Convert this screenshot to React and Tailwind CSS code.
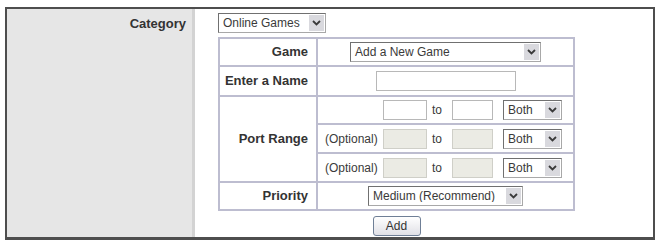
import React from 'react';

const font = { fontFamily: '"Liberation Sans", Arial, sans-serif' };

const Chevron = () => (
  <svg width="9" height="6" viewBox="0 0 9 6" fill="none">
    <path d="M1 1l3.5 3.5L8 1" stroke="#3a3a3a" strokeWidth="1.8" />
  </svg>
);

const Select = ({ value, width }) => (
  <div
    className="flex h-[20px] items-center border border-[#a8a8a8] border-l-[#707070] border-t-[#707070] bg-white"
    style={{ width }}
  >
    <span className="flex-1 truncate pl-[4px] text-[12px] leading-none text-[#3a3a3a]">{value}</span>
    <span className="mr-[1px] flex h-[16px] w-[15px] items-center justify-center bg-[#d9d9de]">
      <Chevron />
    </span>
  </div>
);

const Input = ({ width, disabled }) => (
  <div
    className={`h-[20px] border ${disabled ? 'border-[#cfcfc8] bg-[#ebebe4]' : 'border-[#b8b8b8] bg-white'}`}
    style={{ width }}
  />
);

const PortRow = ({ optional }) => (
  <div className="flex items-center pl-[7px] text-[12px] text-[#3a3a3a]">
    <span className="w-[58px]">{optional ? '(Optional)' : ''}</span>
    <Input width={44} disabled={optional} />
    <span className="w-[25px] pl-[5px]">to</span>
    <Input width={41} disabled={optional} />
    <span className="w-[10px]" />
    <Select value="Both" width={59} />
  </div>
);

const label = 'border-2 border-[#bdbdd0] pr-[8px] text-right text-[13px] font-bold text-[#333]';
const cell = 'border-2 border-[#bdbdd0]';

export default function App() {
  return (
    <div className="h-[242px] w-[659px] bg-white pl-[5px] pt-[7px]" style={font}>
      <div className="flex h-[233px] w-[650px] border-2 border-b-[3px] border-[#4e4e4e]">
        <div className="w-[188px] border-r-[3px] border-r-[#d3d3d3] bg-[#e6e6e6] pr-[6px] pt-[5px] text-right text-[13px] font-bold text-[#333]">
          Category
        </div>
        <div className="flex-1 pl-[23px] pt-[4px]">
          <Select value="Online Games" width={108} />
          <div className="mt-[4px] w-[357px]">
            <table className="w-[357px] border-collapse">
              <tbody>
                <tr className="h-[28px]">
                  <td className={`${label} w-[98px]`}>Game</td>
                  <td className={cell}>
                    <div className="flex justify-center">
                      <Select value="Add a New Game" width={191} />
                    </div>
                  </td>
                </tr>
                <tr className="h-[30px]">
                  <td className={label}>Enter a Name</td>
                  <td className={cell}>
                    <div className="flex justify-center">
                      <Input width={140} />
                    </div>
                  </td>
                </tr>
                <tr className="h-[28px]">
                  <td className={label} rowSpan={3}>Port Range</td>
                  <td className={cell}>
                    <PortRow />
                  </td>
                </tr>
                <tr className="h-[29px]">
                  <td className={cell}>
                    <PortRow optional />
                  </td>
                </tr>
                <tr className="h-[29px]">
                  <td className={cell}>
                    <PortRow optional />
                  </td>
                </tr>
                <tr className="h-[28px]">
                  <td className={label}>Priority</td>
                  <td className={cell}>
                    <div className="flex justify-center">
                      <Select value="Medium (Recommend)" width={155} />
                    </div>
                  </td>
                </tr>
              </tbody>
            </table>
            <div className="mt-[5px] flex justify-center">
              <button className="h-[20px] w-[48px] rounded-[3px] border border-[#6f7f96] bg-gradient-to-b from-white to-[#e0e0e6] text-[12px] text-[#333]">
                Add
              </button>
            </div>
          </div>
        </div>
      </div>
    </div>
  );
}
